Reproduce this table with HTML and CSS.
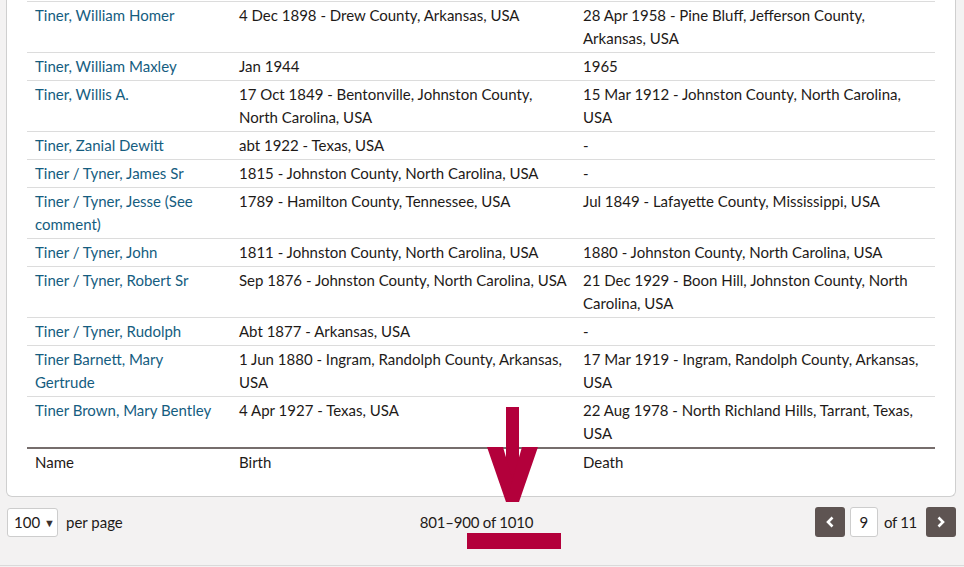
FILE: index.html
```html
<!DOCTYPE html>
<html lang="en">
<head>
<meta charset="utf-8">
<title>Search results</title>
<link rel="stylesheet" href="styles.css">
</head>
<body>
<div class="page">
  <div class="card">
    <table class="results">
      <colgroup><col class="c-name"><col class="c-birth"><col class="c-death"></colgroup>
      <tbody>
        <tr><td><a href="#">Tiner, William Homer</a></td><td>4 Dec 1898 - Drew County, Arkansas, USA</td><td>28 Apr 1958 - Pine Bluff, Jefferson County, Arkansas, USA</td></tr>
        <tr><td><a href="#">Tiner, William Maxley</a></td><td>Jan 1944</td><td>1965</td></tr>
        <tr><td><a href="#">Tiner, Willis A.</a></td><td>17 Oct 1849 - Bentonville, Johnston County, North Carolina, USA</td><td>15 Mar 1912 - Johnston County, North Carolina, USA</td></tr>
        <tr><td><a href="#">Tiner, Zanial Dewitt</a></td><td>abt 1922 - Texas, USA</td><td>-</td></tr>
        <tr><td><a href="#">Tiner / Tyner, James Sr</a></td><td>1815 - Johnston County, North Carolina, USA</td><td>-</td></tr>
        <tr><td><a href="#">Tiner / Tyner, Jesse (See comment)</a></td><td>1789 - Hamilton County, Tennessee, USA</td><td>Jul 1849 - Lafayette County, Mississippi, USA</td></tr>
        <tr><td><a href="#">Tiner / Tyner, John</a></td><td>1811 - Johnston County, North Carolina, USA</td><td>1880 - Johnston County, North Carolina, USA</td></tr>
        <tr><td><a href="#">Tiner / Tyner, Robert Sr</a></td><td>Sep 1876 - Johnston County, North Carolina, USA</td><td>21 Dec 1929 - Boon Hill, Johnston County, North Carolina, USA</td></tr>
        <tr><td><a href="#">Tiner / Tyner, Rudolph</a></td><td>Abt 1877 - Arkansas, USA</td><td>-</td></tr>
        <tr><td><a href="#">Tiner Barnett, Mary Gertrude</a></td><td>1 Jun 1880 - Ingram, Randolph County, Arkansas, USA</td><td>17 Mar 1919 - Ingram, Randolph County, Arkansas, USA</td></tr>
        <tr><td><a href="#">Tiner Brown, Mary Bentley</a></td><td>4 Apr 1927 - Texas, USA</td><td>22 Aug 1978 - North Richland Hills, Tarrant, Texas, USA</td></tr>
      </tbody>
      <tfoot>
        <tr><th>Name</th><th>Birth</th><th>Death</th></tr>
      </tfoot>
    </table>
  </div>
  <div class="pager">
    <div class="per-page">
      <div class="select">100 <span class="caret">&#9660;</span></div>
      <span>per page</span>
    </div>
    <div class="range">801–900 of 1010</div>
    <div class="nav">
      <button class="btn" type="button" aria-label="Previous">
        <svg width="12" height="14" viewBox="0 0 12 14"><path d="M8.5 2.5 L4 7 L8.5 11.5" fill="none" stroke="#fff" stroke-width="2.6"/></svg>
      </button>
      <div class="pageno">9</div>
      <span class="of">of 11</span>
      <button class="btn" type="button" aria-label="Next">
        <svg width="12" height="14" viewBox="0 0 12 14"><path d="M3.5 2.5 L8 7 L3.5 11.5" fill="none" stroke="#fff" stroke-width="2.6"/></svg>
      </button>
    </div>
  </div>
  <div class="bottom-rule"></div>
</div>
<svg class="arrow" width="60" height="100" viewBox="0 0 60 100" aria-hidden="true">
  <rect x="19" y="0" width="13" height="95" fill="#b3003b"/>
  <polygon points="0,40 16,40 32,95 19,95" fill="#b3003b"/>
  <polygon points="35,40 51,40 32,95 19,95" fill="#b3003b"/>
</svg>
<div class="mark"></div>
</body>
</html>
```
FILE: styles.css
```css
html, body {
  margin: 0;
  padding: 0;
  background: #f3f2f2;
}
body {
  font-family: Lato, "Open Sans", sans-serif;
  font-size: 15px;
  color: #1e1a18;
  position: relative;
  height: 567px;
  overflow: hidden;
}
.page {
  padding: 0 8px 0 6px;
}
.card {
  background: #fff;
  border: 1px solid #cfcfcf;
  border-top: none;
  border-radius: 0 0 6px 6px;
  padding: 1px 20px 20px;
}
.results {
  width: 100%;
  border-collapse: collapse;
  table-layout: fixed;
}
.c-name { width: 204px; }
.c-birth { width: 344px; }
.c-death { width: 360px; }
.results td, .results th {
  padding: 2px 8px;
  line-height: 23px;
  vertical-align: top;
  text-align: left;
  font-weight: normal;
}
.results tbody tr {
  border-top: 1px solid #dcdcdc;
}
.results tbody tr:last-child td {
  border-bottom: 2px solid #766d6c;
}
.results a {
  color: #155d7f;
  text-decoration: none;
}
.pager {
  display: grid;
  grid-template-columns: 1fr auto 1fr;
  align-items: center;
  margin-top: 10px;
  padding-left: 1px;
  height: 30px;
}
.per-page {
  display: flex;
  align-items: center;
  gap: 8px;
}
.select {
  width: 51px;
  height: 29px;
  box-sizing: border-box;
  background: #fff;
  border: 1px solid #cdcdcd;
  border-radius: 3px;
  padding-left: 6px;
  display: flex;
  align-items: center;
  gap: 4px;
}
.caret {
  font-size: 11px;
  color: #3a302e;
}
.range {
  text-align: center;
  padding-right: 10px;
  letter-spacing: -0.2px;
}
.nav {
  display: flex;
  justify-content: flex-end;
  align-items: center;
}
.btn {
  width: 30px;
  height: 30px;
  border: none;
  border-radius: 3px;
  background: #5e5452;
  display: flex;
  align-items: center;
  justify-content: center;
  padding: 0;
}
.pageno {
  width: 28px;
  height: 30px;
  box-sizing: border-box;
  margin-left: 5px;
  background: #fff;
  border: 1px solid #cdcdcd;
  border-radius: 3px;
  display: flex;
  align-items: center;
  justify-content: center;
}
.of {
  margin: 0 9px 0 6px;
  letter-spacing: -0.3px;
}
.bottom-rule {
  margin-top: 28px;
  margin-left: -6px;
  margin-right: -8px;
  border-top: 1px solid #dadada;
}
.arrow {
  position: absolute;
  left: 487px;
  top: 407px;
}
.mark {
  position: absolute;
  left: 467px;
  top: 533px;
  width: 94px;
  height: 16px;
  background: #b3003b;
}
```
